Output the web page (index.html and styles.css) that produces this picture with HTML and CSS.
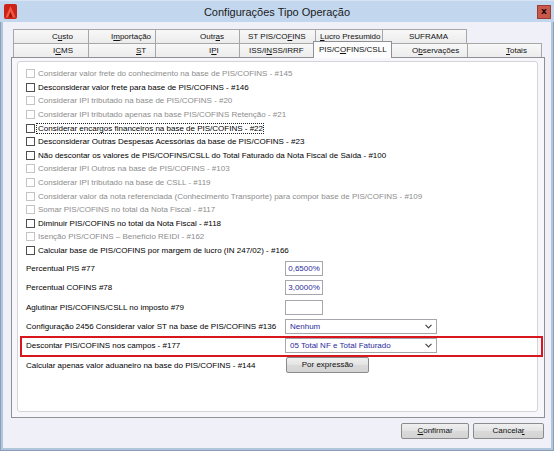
FILE: index.html
```html
<!DOCTYPE html>
<html lang="pt-BR">
<head>
<meta charset="utf-8">
<title>Configurações Tipo Operação</title>
<link rel="stylesheet" href="styles.css">
</head>
<body>
<div class="window">
  <header class="titlebar">
    <svg class="app-icon" width="13" height="15" viewBox="0 0 13 15" aria-hidden="true">
      <rect x="0" y="0" width="13" height="15" rx="2" fill="#cc2218"/>
      <path d="M1.5 13.5 L6.5 2 L11.5 13.5 Z" fill="#ee5a42"/>
      <path d="M4.2 13.5 L6.5 7.5 L8.8 13.5 Z" fill="#a80e0a"/>
    </svg>
    <h1 class="title">Configurações Tipo Operação</h1>
    <div class="close-btn">x</div>
  </header>

  <div class="client">
    <nav class="tabs">
      <div class="tab-row">
        <div class="tab t-custo">C<u>u</u>sto</div>
        <div class="tab t-import">I<u>m</u>portação</div>
        <div class="tab t-outras">Outr<u>a</u>s</div>
        <div class="tab t-stpis">ST PIS/CO<u>F</u>INS</div>
        <div class="tab t-lucro"><u>L</u>ucro Presumido</div>
        <div class="tab t-suframa">SUFRAMA</div>
      </div>
      <div class="tab-row">
        <div class="tab t-icms">I<u>C</u>MS</div>
        <div class="tab t-st"><u>S</u>T</div>
        <div class="tab t-ipi">I<u>P</u>I</div>
        <div class="tab t-iss">ISS/I<u>N</u>SS/IRRF</div>
        <div class="tab t-pis selected">PIS/C<u>O</u>FINS/CSLL</div>
        <div class="tab t-obs">O<u>b</u>servações</div>
        <div class="tab t-totais"><u>T</u>otais</div>
      </div>
    </nav>

    <section class="page">
      <div class="panel">
        <ul class="checks">
          <li class="check disabled"><span class="box"></span><span class="lbl">Considerar valor frete do conhecimento na base de PIS/COFINS - #145</span></li>
          <li class="check"><span class="box"></span><span class="lbl">Desconsiderar valor frete para base de PIS/COFINS - #146</span></li>
          <li class="check disabled"><span class="box"></span><span class="lbl">Considerar IPI tributado na base de PIS/COFINS - #20</span></li>
          <li class="check disabled"><span class="box"></span><span class="lbl">Considerar IPI tributado apenas na base PIS/COFINS Retenção - #21</span></li>
          <li class="check"><span class="box"></span><span class="lbl focus">Considerar encargos financeiros na base de PIS/COFINS - #22</span></li>
          <li class="check"><span class="box"></span><span class="lbl">Desconsiderar Outras Despesas Acessórias da base de PIS/COFINS - #23</span></li>
          <li class="check"><span class="box"></span><span class="lbl">Não descontar os valores de PIS/COFINS/CSLL do Total Faturado da Nota Fiscal de Saída - #100</span></li>
          <li class="check disabled"><span class="box"></span><span class="lbl">Considerar IPI Outros na base de PIS/COFINS - #103</span></li>
          <li class="check disabled"><span class="box"></span><span class="lbl">Considerar IPI tributado na base de CSLL - #119</span></li>
          <li class="check disabled"><span class="box"></span><span class="lbl">Considerar valor da nota referenciada (Conhecimento Transporte) para compor base de PIS/COFINS - #109</span></li>
          <li class="check disabled"><span class="box"></span><span class="lbl">Somar PIS/COFINS no total da Nota Fiscal - #117</span></li>
          <li class="check"><span class="box"></span><span class="lbl">Diminuir PIS/COFINS no total da Nota Fiscal - #118</span></li>
          <li class="check disabled"><span class="box"></span><span class="lbl">Isenção PIS/COFINS – Benefício REIDI - #162</span></li>
          <li class="check"><span class="box"></span><span class="lbl">Calcular base de PIS/COFINS por margem de lucro (IN 247/02) - #166</span></li>
        </ul>

        <div class="form">
          <div class="frow">
            <span class="flabel">Percentual PIS #77</span>
            <div class="input">0,6500%</div>
          </div>
          <div class="frow">
            <span class="flabel">Percentual COFINS #78</span>
            <div class="input">3,0000%</div>
          </div>
          <div class="frow">
            <span class="flabel">Aglutinar PIS/COFINS/CSLL no imposto #79</span>
            <div class="input"></div>
          </div>
          <div class="frow">
            <span class="flabel">Configuração 2456 Considerar valor ST na base de PIS/COFINS #136</span>
            <div class="select"><span>Nenhum</span><svg class="chev" width="7" height="5" viewBox="0 0 7 5"><path d="M0.5 0.8 L3.5 3.8 L6.5 0.8" fill="none" stroke="#444" stroke-width="1.2"/></svg></div>
          </div>
          <div class="frow highlight">
            <span class="flabel">Descontar PIS/COFINS nos campos - #177</span>
            <div class="select"><span>05 Total NF e Total Faturado</span><svg class="chev" width="7" height="5" viewBox="0 0 7 5"><path d="M0.5 0.8 L3.5 3.8 L6.5 0.8" fill="none" stroke="#444" stroke-width="1.2"/></svg></div>
          </div>
          <div class="frow brow">
            <span class="flabel">Calcular apenas valor aduaneiro na base do PIS/COFINS - #144</span>
            <div class="btn btn-expr">Por expressão</div>
          </div>
        </div>
      </div>
    </section>

    <footer class="actions">
      <div class="btn btn-ok"><u>C</u>onfirmar</div>
      <div class="btn btn-cancel">Cancela<u>r</u></div>
    </footer>
  </div>
</div>
</body>
</html>
```

FILE: styles.css
```css
* {
  box-sizing: border-box;
  margin: 0;
  padding: 0;
}

html,
body {
  width: 554px;
  height: 451px;
  overflow: hidden;
}

body {
  font-family: "Liberation Sans", Arial, sans-serif;
  font-size: 8px;
  color: #000;
  background: #ffffff;
}

u {
  text-decoration: underline;
  text-underline-offset: 1px;
}

/* ---------- window frame ---------- */
.window {
  width: 554px;
  height: 451px;
  display: flex;
  flex-direction: column;
  background: #b1c5dc;
  box-shadow: inset 0 0 0 1px #8aa0b8;
}

.titlebar {
  height: 22px;
  flex: 0 0 22px;
  display: flex;
  align-items: center;
  background: #c2d6ed;
  border-top: 1px solid #d6e4f4;
  padding: 0 4px 0 4px;
}

.app-icon {
  flex: 0 0 13px;
  margin-top: 0;
}

.title {
  flex: 1;
  text-align: center;
  font-family: "Liberation Sans", Arial, sans-serif;
  font-size: 11px;
  font-weight: normal;
  color: #1b1b1b;
  padding-top: 1px;
}

.close-btn {
  width: 14px;
  height: 14px;
  background: #c9574a;
  border: 1px solid #9b3b31;
  color: #1a0a08;
  font-family: "DejaVu Sans", sans-serif;
  font-weight: bold;
  font-size: 9px;
  line-height: 11px;
  text-align: center;
  margin-right: -1px;
}

/* ---------- client area ---------- */
.client {
  flex: 1;
  margin: 0 3px 3px 3px;
  background: #f0f0f8;
  display: flex;
  flex-direction: column;
}

/* ---------- tabs ---------- */
.tabs {
  margin: 7px 0 0 10px;
  position: relative;
  z-index: 2;
}

.tab-row {
  display: flex;
  height: 14px;
}

.tab {
  height: 14px;
  border-top: 1px solid #a7a7a7;
  border-left: 1px solid #a7a7a7;
  background: linear-gradient(#f8f8f8, #ececec);
  line-height: 13px;
  white-space: nowrap;
  color: #111;
}

.tab:last-child {
  border-right: 1px solid #a7a7a7;
}

.t-custo   { width: 75px; padding-left: 38px; }
.t-import  { width: 67px; padding-left: 22px; }
.t-outras  { width: 84px; padding-left: 44px; }
.t-stpis   { width: 76px; padding-left: 8px; }
.t-lucro   { width: 67px; padding-left: 4px; }
.t-suframa { width: 85px; padding-left: 26px; }

.t-icms    { width: 75px; padding-left: 39px; }
.t-st      { width: 67px; padding-left: 47px; }
.t-ipi     { width: 84px; padding-left: 53px; }
.t-iss     { width: 76px; padding-left: 9px; }
.t-pis     { width: 75px; padding-left: 3px; }
.t-obs     { width: 77px; padding-left: 21px; }
.t-totais  { width: 75px; padding-left: 38px; }

.tab.selected {
  position: relative;
  z-index: 3;
  width: 79px;
  height: 17px;
  margin: -2px -2px 0 -2px;
  padding-left: 5px;
  padding-top: 1px;
  background: #fcfcfc;
  border-color: #8e9096;
  border-right: 1px solid #8e9096;
}

/* ---------- tab page ---------- */
.page {
  flex: 1;
  margin: 0 6px 0 8px;
  border: 1px solid #8e9096;
  background: #f7f7fb;
  display: flex;
  flex-direction: column;
  padding: 3px 6px 5px 5px;
}

.panel {
  flex: 1;
  background: #ffffff;
  border: 1px solid #d4d4d8;
  border-radius: 3px;
  padding: 5px 0 0 8px;
}

/* ---------- checkboxes ---------- */
.checks {
  list-style: none;
}

.check {
  height: 13.6px;
  display: flex;
  align-items: center;
  white-space: nowrap;
}

.box {
  width: 9px;
  height: 9px;
  flex: 0 0 9px;
  border: 1px solid #4e4e4e;
  background: #fff;
  margin-right: 3px;
}

.check.disabled .box {
  border-color: #c4c4c4;
}

.check.disabled .lbl {
  color: #8d8d8d;
}

.lbl.focus {
  outline: 1px dotted #222;
  outline-offset: 0;
  margin-left: -1px;
  padding: 0 0 0 1px;
}

/* ---------- form rows ---------- */
.form {
  margin-top: 3.6px;
  display: flex;
  flex-direction: column;
  gap: 4.3px;
}

.frow {
  display: grid;
  grid-template-columns: 259px auto;
  justify-content: start;
  align-items: center;
  height: 15px;
  white-space: nowrap;
}

.frow.brow {
  height: 16px;
}

.frow.highlight {
  position: relative;
}

.frow.highlight::after {
  content: "";
  position: absolute;
  left: -6px;
  right: -6px;
  top: -2px;
  bottom: -4px;
  border: 2px solid #d8161d;
  pointer-events: none;
}

.input {
  width: 38px;
  height: 15px;
  border: 1px solid #a5a7ad;
  background: #fff;
  color: #2b2b9c;
  text-align: center;
  line-height: 13px;
}

.select {
  width: 152px;
  height: 15px;
  border: 1px solid #a5a7ad;
  background: #fff;
  color: #2b2b9c;
  display: flex;
  align-items: center;
  padding-left: 4px;
  padding-right: 4px;
}

.select span {
  flex: 1;
}

.chev {
  flex: 0 0 7px;
}

/* ---------- buttons ---------- */
.btn {
  height: 16px;
  border: 1px solid #8b8b8b;
  border-radius: 2px;
  background: linear-gradient(#f0f0f0, #e3e3e3 50%, #d9d9d9 51%, #d4d4d4);
  text-align: center;
  line-height: 14px;
  color: #111;
  white-space: nowrap;
}

.btn-expr {
  width: 83px;
  margin-left: 1px;
}

.actions {
  flex: 0 0 auto;
  display: flex;
  justify-content: flex-end;
  gap: 4px;
  margin: 5px 7px 9px 0;
}

.btn-ok {
  width: 68px;
}

.btn-cancel {
  width: 71px;
}
```
